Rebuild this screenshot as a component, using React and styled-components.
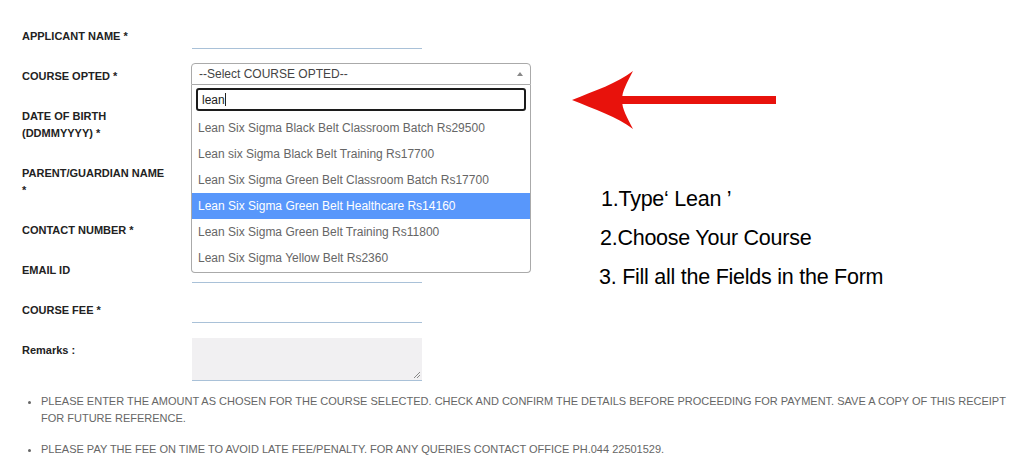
import styled, { createGlobalStyle } from "styled-components";

const GlobalStyle = createGlobalStyle`
  html, body {
    margin: 0;
    padding: 0;
    background: #fff;
    font-family: "Liberation Sans", Arial, sans-serif;
  }
`;

const Page = styled.div`
  width: 1024px;
  height: 466px;
  overflow: hidden;
  box-sizing: border-box;
  padding: 20px 0 0 22px;
`;

const Top = styled.div`
  display: flex;
`;

const Form = styled.div`
  width: 550px;
  display: flex;
  flex-direction: column;
`;

const Row = styled.div`
  display: grid;
  grid-template-columns: 169px 1fr;
  align-items: start;
`;

const Label = styled.div`
  font-size: 11px;
  font-weight: bold;
  color: #222;
  line-height: 17px;
  padding: 8px 0 15px;
  width: ${(p) => p.$w || "auto"};
`;

const LineInput = styled.div`
  width: 230px;
  height: 28px;
  border-bottom: 1px solid #a9c1d8;
  margin-left: 1px;
`;

const SelectWrap = styled.div`
  position: relative;
  width: 340px;
  margin-top: 3px;
`;

const SelectBox = styled.div`
  height: 22px;
  box-sizing: border-box;
  border: 1px solid #aaa;
  border-radius: 4px 4px 0 0;
  display: flex;
  align-items: center;
  justify-content: space-between;
  padding: 0 7px;
  font-size: 12px;
  color: #444;
`;

const Caret = styled.span`
  width: 0;
  height: 0;
  border-left: 3px solid transparent;
  border-right: 3px solid transparent;
  border-bottom: 4px solid #888;
`;

const Dropdown = styled.div`
  position: absolute;
  top: 22px;
  left: 0;
  right: 0;
  background: #fff;
  border: 1px solid #aaa;
  border-top: none;
  border-radius: 0 0 4px 4px;
  box-sizing: border-box;
  padding-top: 3px;
  z-index: 2;
`;

const Search = styled.div`
  margin: 0 4px;
  height: 23px;
  box-sizing: border-box;
  border: 2px solid #1c1c1c;
  border-radius: 3px;
  font-size: 12px;
  color: #222;
  display: flex;
  align-items: center;
  padding-left: 4px;

  &::after {
    content: "";
    width: 1px;
    height: 13px;
    background: #222;
  }
`;

const Option = styled.div`
  height: 26px;
  display: flex;
  align-items: center;
  padding-left: 6px;
  font-size: 12px;
  color: ${(p) => (p.$active ? "#fff" : "#666")};
  background: ${(p) => (p.$active ? "#5897fb" : "transparent")};
`;

const Options = styled.div`
  margin-top: 4px;
  padding-bottom: 1px;
`;

const TextArea = styled.div`
  position: relative;
  width: 230px;
  height: 42px;
  margin: 4px 0 0 1px;
  background: #f1f0f2;
  border-bottom: 1px solid #a9c1d8;
`;

const Grip = styled.svg`
  position: absolute;
  right: 1px;
  bottom: 1px;
`;

const Side = styled.div`
  padding: 51px 0 0 0;
  display: flex;
  flex-direction: column;
`;

const Steps = styled.div`
  margin: 57px 0 0 28px;
  display: flex;
  flex-direction: column;
  gap: 17px;
`;

const Step = styled.div`
  font-size: 21.5px;
  line-height: 22px;
  color: #000;
  letter-spacing: -0.25px;
  margin-left: ${(p) => p.$indent || 0}px;
`;

const Notes = styled.ul`
  margin: 12px 0 0;
  padding: 0 0 0 19px;
  width: 990px;
  font-size: 11px;
  color: #666;
  line-height: 17px;

  li {
    margin-bottom: 14px;
    padding-left: 0;
  }
`;

const options = [
  "Lean Six Sigma Black Belt Classroom Batch Rs29500",
  "Lean six Sigma Black Belt Training Rs17700",
  "Lean Six Sigma Green Belt Classroom Batch Rs17700",
  "Lean Six Sigma Green Belt Healthcare Rs14160",
  "Lean Six Sigma Green Belt Training Rs11800",
  "Lean Six Sigma Yellow Belt Rs2360",
];

const Arrow = () => (
  <svg width="206" height="60" viewBox="0 0 206 60">
    <rect x="48" y="25" width="156" height="8" fill="#e8120c" />
    <path d="M0 29 C22 20 46 12 61 0 C55 12 50 20 50 29 C50 38 55 46 61 58 C46 46 22 38 0 29 Z" fill="#e8120c" />
  </svg>
);

export default function App() {
  return (
    <Page>
      <GlobalStyle />
      <Top>
        <Form>
          <Row>
            <Label>APPLICANT NAME *</Label>
            <LineInput />
          </Row>
          <Row>
            <Label>COURSE OPTED *</Label>
            <SelectWrap>
              <SelectBox>
                <span>--Select COURSE OPTED--</span>
                <Caret />
              </SelectBox>
              <Dropdown>
                <Search>lean</Search>
                <Options>
                  {options.map((o, i) => (
                    <Option key={o} $active={i === 3}>
                      {o}
                    </Option>
                  ))}
                </Options>
              </Dropdown>
            </SelectWrap>
          </Row>
          <Row>
            <Label $w="120px">DATE OF BIRTH (DDMMYYYY) *</Label>
            <LineInput />
          </Row>
          <Row>
            <Label $w="146px">PARENT/GUARDIAN NAME *</Label>
            <LineInput />
          </Row>
          <Row>
            <Label>CONTACT NUMBER *</Label>
            <LineInput />
          </Row>
          <Row>
            <Label>EMAIL ID</Label>
            <LineInput />
          </Row>
          <Row>
            <Label>COURSE FEE *</Label>
            <LineInput />
          </Row>
          <Row>
            <Label>Remarks :</Label>
            <TextArea>
              <Grip width="9" height="9" viewBox="0 0 9 9">
                <path d="M8 2 L2 8 M8 5 L5 8" stroke="#888" strokeWidth="1" />
              </Grip>
            </TextArea>
          </Row>
        </Form>
        <Side>
          <Arrow />
          <Steps>
            <Step $indent={1}>1.Type‘ Lean ’</Step>
            <Step>2.Choose Your Course</Step>
            <Step $indent={-1}>3. Fill all the Fields in the Form</Step>
          </Steps>
        </Side>
      </Top>
      <Notes>
        <li>
          PLEASE ENTER THE AMOUNT AS CHOSEN FOR THE COURSE SELECTED. CHECK AND CONFIRM THE DETAILS BEFORE PROCEEDING FOR
          PAYMENT. SAVE A COPY OF THIS RECEIPT FOR FUTURE REFERENCE.
        </li>
        <li>PLEASE PAY THE FEE ON TIME TO AVOID LATE FEE/PENALTY. FOR ANY QUERIES CONTACT OFFICE PH.044 22501529.</li>
      </Notes>
    </Page>
  );
}
